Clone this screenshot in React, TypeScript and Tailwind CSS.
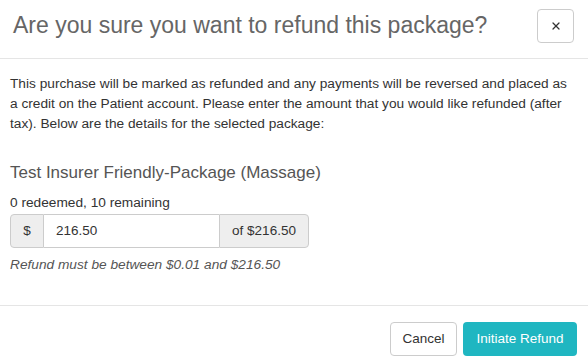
import { X } from 'lucide-react';

const FONT = { fontFamily: '"Liberation Sans", Arial, sans-serif' };

export default function App() {
  return (
    <div className="w-[588px] h-[359px] bg-white text-[#333] overflow-hidden" style={FONT}>
      {/* Header */}
      <div className="flex items-start justify-between h-[59px] border-b border-[#e5e5e5] pl-[13px] pr-[14px] pt-[9px]">
        <h2 className="mt-[4px] text-[23px] leading-[24px] text-[#666] font-normal">
          Are you sure you want to refund this package?
        </h2>
        <button className="w-[37px] h-[34px] flex items-center justify-center border border-[#ccc] rounded-[4px] bg-white">
          <X size={12} strokeWidth={2.5} className="text-[#333]" />
        </button>
      </div>

      {/* Body */}
      <div className="pl-[10px] pr-[10px] pt-[15px] pb-[30px] border-b border-[#e5e5e5]">
        <p className="text-[13.7px] leading-[20px] whitespace-nowrap">
          This purchase will be marked as refunded and any payments will be reversed and placed as
          <br />
          a credit on the Patient account. Please enter the amount that you would like refunded (after
          <br />
          tax). Below are the details for the selected package:
        </p>

        <h3 className="mt-[27px] text-[17px] leading-[24px] text-[#555]">Test Insurer Friendly-Package (Massage)</h3>
        <div className="mt-[8px] text-[13.7px] leading-[20px]">0 redeemed, 10 remaining</div>

        <div className="mt-[1px] flex w-[299px] h-[34px] text-[13.5px]">
          <span className="w-[34px] flex items-center justify-center bg-[#eee] border border-[#ccc] rounded-l-[4px]">
            $
          </span>
          <input
            defaultValue="216.50"
            className="w-[175px] px-[12px] border-y border-[#ccc] outline-none text-[#333]"
          />
          <span className="flex-1 flex items-center justify-center bg-[#eee] border border-[#ccc] rounded-r-[4px]">
            of $216.50
          </span>
        </div>

        <div className="mt-[7px] text-[13.7px] leading-[20px] italic text-[#555]">
          Refund must be between $0.01 and $216.50
        </div>
      </div>

      {/* Footer */}
      <div className="flex justify-end gap-[6px] pt-[16px] pr-[11px]">
        <button className="h-[34px] w-[67px] border border-[#ccc] rounded-[4px] bg-white text-[13.5px] text-[#333]">
          Cancel
        </button>
        <button className="h-[34px] w-[114px] rounded-[4px] bg-[#1fb6c1] text-[13.5px] text-white">
          Initiate Refund
        </button>
      </div>
    </div>
  );
}
